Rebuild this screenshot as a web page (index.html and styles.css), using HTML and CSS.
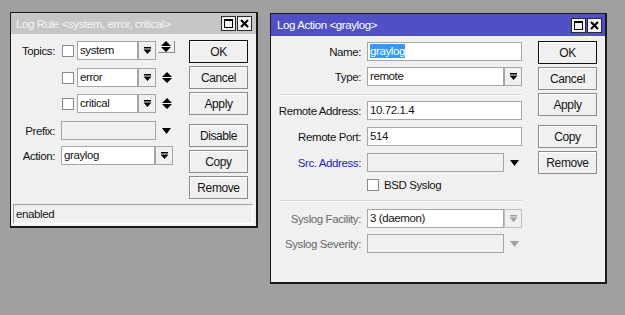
FILE: index.html
```html
<!DOCTYPE html>
<html lang="en">
<head>
  <meta charset="UTF-8">
  <title>Log Rule / Log Action</title>
  <link rel="stylesheet" href="styles.css">
</head>
<body>
  <div class="desktop">

    <!-- inactive window: log rule -->
    <div class="window win-rule">
      <div class="titlebar inactive">
        <span class="title">Log Rule &lt;system, error, critical&gt;</span>
        <div class="title-btns">
          <span class="tbtn"><span class="max-box"></span></span>
          <span class="tbtn">
            <svg width="9" height="9" viewBox="0 0 9 9"><path d="M1 1 L8 8 M8 1 L1 8" stroke="#000" stroke-width="2"/></svg>
          </span>
        </div>
      </div>

      <div class="win-body">
        <div class="form rule-form">
          <div class="row first">
            <label class="lbl">Topics:</label>
            <span class="check"></span>
            <span class="field topic">system</span>
            <span class="dd-btn"><svg width="9" height="9" viewBox="0 0 9 9"><rect x="1" y="1" width="7" height="1.5" fill="#000"/><path d="M0.5 3.5 H8.5 L4.5 8 Z" fill="#000"/></svg></span>
            <span class="updown focus"><svg width="10" height="11" viewBox="0 0 10 11"><path d="M5 0 L10 5 H0 Z M0 6 H10 L5 11 Z" fill="#000"/></svg></span>
          </div>
          <div class="row">
            <span class="lbl"></span>
            <span class="check"></span>
            <span class="field topic">error</span>
            <span class="dd-btn"><svg width="9" height="9" viewBox="0 0 9 9"><rect x="1" y="1" width="7" height="1.5" fill="#000"/><path d="M0.5 3.5 H8.5 L4.5 8 Z" fill="#000"/></svg></span>
            <span class="updown"><svg width="10" height="11" viewBox="0 0 10 11"><path d="M5 0 L10 5 H0 Z M0 6 H10 L5 11 Z" fill="#000"/></svg></span>
          </div>
          <div class="row">
            <span class="lbl"></span>
            <span class="check"></span>
            <span class="field topic">critical</span>
            <span class="dd-btn"><svg width="9" height="9" viewBox="0 0 9 9"><rect x="1" y="1" width="7" height="1.5" fill="#000"/><path d="M0.5 3.5 H8.5 L4.5 8 Z" fill="#000"/></svg></span>
            <span class="updown"><svg width="10" height="11" viewBox="0 0 10 11"><path d="M5 0 L10 5 H0 Z M0 6 H10 L5 11 Z" fill="#000"/></svg></span>
          </div>
          <div class="row gap-before">
            <label class="lbl">Prefix:</label>
            <span class="field disabled prefix"></span>
            <span class="dd-tri"><svg width="9" height="6" viewBox="0 0 9 6"><path d="M0 0 H9 L4.5 6 Z" fill="#000"/></svg></span>
          </div>
          <div class="row">
            <label class="lbl">Action:</label>
            <span class="field action">graylog</span>
            <span class="dd-btn"><svg width="9" height="9" viewBox="0 0 9 9"><rect x="1" y="1" width="7" height="1.5" fill="#000"/><path d="M0.5 3.5 H8.5 L4.5 8 Z" fill="#000"/></svg></span>
          </div>
        </div>

        <div class="buttons">
          <button class="btn default">OK</button>
          <button class="btn">Cancel</button>
          <button class="btn">Apply</button>
          <button class="btn sep">Disable</button>
          <button class="btn">Copy</button>
          <button class="btn">Remove</button>
        </div>
      </div>

      <div class="statusbar">enabled</div>
    </div>

    <!-- active window: log action -->
    <div class="window win-action">
      <div class="titlebar active">
        <span class="title">Log Action &lt;graylog&gt;</span>
        <div class="title-btns">
          <span class="tbtn"><span class="max-box"></span></span>
          <span class="tbtn">
            <svg width="9" height="9" viewBox="0 0 9 9"><path d="M1 1 L8 8 M8 1 L1 8" stroke="#000" stroke-width="2"/></svg>
          </span>
        </div>
      </div>

      <div class="win-body">
        <div class="form action-form">
          <div class="row name-row">
            <label class="lbl">Name:</label>
            <span class="field wide"><span class="selected">graylog</span></span>
          </div>
          <div class="row">
            <label class="lbl">Type:</label>
            <span class="field combo">remote</span>
            <span class="dd-btn"><svg width="9" height="9" viewBox="0 0 9 9"><rect x="1" y="1" width="7" height="1.5" fill="#000"/><path d="M0.5 3.5 H8.5 L4.5 8 Z" fill="#000"/></svg></span>
          </div>
          <div class="separator"></div>
          <div class="row">
            <label class="lbl">Remote Address:</label>
            <span class="field wide">10.72.1.4</span>
          </div>
          <div class="row">
            <label class="lbl">Remote Port:</label>
            <span class="field wide">514</span>
          </div>
          <div class="row">
            <label class="lbl link">Src. Address:</label>
            <span class="field combo disabled"></span>
            <span class="dd-tri"><svg width="9" height="6" viewBox="0 0 9 6"><path d="M0 0 H9 L4.5 6 Z" fill="#000"/></svg></span>
          </div>
          <div class="row check-row">
            <span class="lbl"></span>
            <span class="check"></span>
            <span class="check-text">BSD Syslog</span>
          </div>
          <div class="separator second"></div>
          <div class="row facility-row">
            <label class="lbl muted">Syslog Facility:</label>
            <span class="field combo">3 (daemon)</span>
            <span class="dd-btn off"><svg width="9" height="9" viewBox="0 0 9 9"><rect x="1" y="1" width="7" height="1.5" fill="#a0a0a0"/><path d="M0.5 3.5 H8.5 L4.5 8 Z" fill="#a0a0a0"/></svg></span>
          </div>
          <div class="row">
            <label class="lbl muted">Syslog Severity:</label>
            <span class="field combo disabled"></span>
            <span class="dd-tri"><svg width="9" height="6" viewBox="0 0 9 6"><path d="M0 0 H9 L4.5 6 Z" fill="#a0a0a0"/></svg></span>
          </div>
        </div>

        <div class="buttons">
          <button class="btn default">OK</button>
          <button class="btn">Cancel</button>
          <button class="btn">Apply</button>
          <button class="btn sep">Copy</button>
          <button class="btn">Remove</button>
        </div>
      </div>
    </div>

  </div>
</body>
</html>
```

FILE: styles.css
```css
html, body {
  margin: 0;
  padding: 0;
}

body {
  background-color: #a0a0a0;
  font-family: "Liberation Sans", Arial, sans-serif;
  font-size: 11.5px;
  letter-spacing: -0.4px;
  color: #141414;
}

.desktop {
  position: relative;
  width: 625px;
  height: 315px;
  overflow: hidden;
}

/* windows sit on the desktop at their own places */
.window {
  position: absolute;
  box-sizing: border-box;
  display: flex;
  flex-direction: column;
  background-color: #f0f0f0;
  border: 1px solid #1a1a1a;
  border-right-width: 2px;
  border-bottom-width: 2px;
}

.win-rule {
  left: 10px;
  top: 12px;
  width: 248px;
  height: 216px;
}

.win-action {
  left: 270px;
  top: 13px;
  width: 337px;
  height: 271px;
}

.titlebar {
  display: flex;
  align-items: center;
  justify-content: space-between;
  padding: 0 4px 0 5px;
  flex-shrink: 0;
}

.titlebar.inactive {
  height: 21px;
  background-color: #c6c6c6;
  color: #f4f4f4;
}

.titlebar.active {
  height: 22px;
  background-color: #5050c6;
  color: #ffffff;
  padding: 0 3px 0 6px;
}

.title {
  white-space: nowrap;
  font-size: 11.5px;
}

.title-btns {
  display: flex;
  gap: 1px;
}

.tbtn {
  width: 13px;
  height: 13px;
  border: 1px solid #2a2a2a;
  background-color: #f0f0f0;
  display: flex;
  align-items: center;
  justify-content: center;
}

.max-box {
  width: 7px;
  height: 6px;
  border: 1px solid #000;
  border-top-width: 2px;
}

.win-body {
  display: flex;
}

.form {
  display: flex;
  flex-direction: column;
}

.rule-form {
  width: 178px;
  padding-top: 7px;
}

.action-form {
  width: 267px;
  padding-top: 6px;
}

.row {
  display: flex;
  align-items: center;
  height: 19px;
  margin-bottom: 7px;
  white-space: nowrap;
}

.row.first {
  margin-bottom: 8px;
}

.row.gap-before {
  margin-top: 1px;
  margin-bottom: 6px;
}

.row.name-row {
  margin-bottom: 6px;
}

.row.facility-row {
  margin-bottom: 6px;
}

.lbl {
  flex-shrink: 0;
  text-align: right;
  margin-right: 6px;
}

.rule-form .lbl {
  width: 44px;
}

.action-form .lbl {
  width: 90px;
}

.lbl.link {
  color: #1c1ccc;
}

.lbl.muted {
  color: #6a6a6a;
}

.check {
  box-sizing: border-box;
  width: 12px;
  height: 12px;
  border: 1px solid #8a8a8a;
  background-color: #fff;
  margin-left: 1px;
  margin-right: 3px;
  flex-shrink: 0;
}

.field {
  box-sizing: border-box;
  height: 19px;
  border: 1px solid #a6a6a6;
  background-color: #fff;
  padding: 0 2px;
  line-height: 17px;
  overflow: hidden;
  flex-shrink: 0;
}

.field.disabled {
  background-color: #f0f0f0;
}

.field.topic {
  width: 61px;
}

.field.prefix {
  width: 95px;
}

.field.action {
  width: 94px;
}

.field.wide {
  width: 155px;
}

.field.combo {
  width: 137px;
}

.selected {
  background-color: #3399ff;
  color: #fff;
  padding: 1px 0;
}

.dd-btn {
  box-sizing: border-box;
  width: 18px;
  height: 19px;
  border: 1px solid #a6a6a6;
  background-color: #f0f0f0;
  display: flex;
  align-items: center;
  justify-content: center;
  flex-shrink: 0;
}

.dd-btn.off {
  border-color: #c0c0c0;
}

.dd-tri {
  width: 18px;
  display: flex;
  justify-content: center;
  padding-left: 1px;
}

.updown {
  box-sizing: border-box;
  width: 17px;
  height: 19px;
  margin-left: 2px;
  display: flex;
  align-items: center;
  justify-content: center;
  padding-bottom: 1px;
}

.updown.focus {
  border-right: 1px solid #8a8a8a;
  border-bottom: 1px solid #8a8a8a;
  height: 12px;
  align-self: flex-start;
  align-items: flex-end;
  padding-bottom: 0;
  overflow: visible;
}

.separator {
  height: 0;
  border-top: 1px solid #d4d4d4;
  border-bottom: 1px solid #fafafa;
  margin: 1px 0 5px 9px;
  width: 242px;
}

.separator.second {
  margin: 0 0 7px 9px;
}

.check-row {
  height: 12px;
  margin-bottom: 9px;
}

.check-row .check {
  margin-left: 0;
  margin-right: 5px;
}

.buttons {
  display: flex;
  flex-direction: column;
  gap: 3px;
  padding-top: 6px;
}

.win-action .buttons {
  padding-top: 5px;
}

.btn {
  width: 59px;
  height: 23px;
  padding: 0;
  font-family: inherit;
  font-size: 12px;
  letter-spacing: -0.4px;
  color: #141414;
  background-color: #f0f0f0;
  border: 1px solid #8c8c8c;
  box-shadow: inset 1px 1px 0 #ffffff;
  cursor: pointer;
}

.btn.default {
  border-color: #101010;
}

.btn.sep {
  margin-top: 6px;
}

.statusbar {
  margin: auto 3px 2px 2px;
  height: 20px;
  box-sizing: border-box;
  border: 1px solid #a0a0a0;
  border-right-color: #ffffff;
  border-bottom-color: #ffffff;
  padding-left: 2px;
  line-height: 18px;
}
```
